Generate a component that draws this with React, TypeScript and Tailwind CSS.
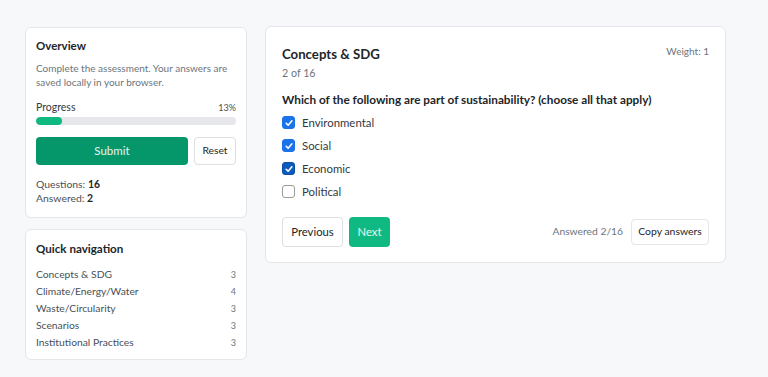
import { useState } from 'react';

const sections = [
  { name: 'Concepts & SDG', count: 3 },
  { name: 'Climate/Energy/Water', count: 4 },
  { name: 'Waste/Circularity', count: 3 },
  { name: 'Scenarios', count: 3 },
  { name: 'Institutional Practices', count: 3 },
];

const options = ['Environmental', 'Social', 'Economic', 'Political'];

function CheckBox({ checked, focused }: { checked: boolean; focused?: boolean }) {
  return (
    <span
      className={`flex h-[13px] w-[13px] flex-shrink-0 items-center justify-center rounded-[3px] border ${
        checked
          ? focused
            ? 'border-[#0b4fa3] bg-[#0d5bbd]'
            : 'border-[#1a73e8] bg-[#1a73e8]'
          : 'border-[#9a9a9a] bg-white'
      }`}
    >
      {checked && (
        <svg viewBox="0 0 12 12" className="h-[10px] w-[10px]">
          <path d="M2.6 6.3 L5 8.6 L9.5 3.4" fill="none" stroke="white" strokeWidth="1.9" strokeLinecap="round" strokeLinejoin="round" />
        </svg>
      )}
    </span>
  );
}

export default function App() {
  const [answers, setAnswers] = useState<boolean[]>([true, true, true, false]);
  const progress = 13;

  return (
    <div className="min-h-[377px] bg-[#f7f8fa] px-[25px] pt-[26px] text-[#212529]" style={{ fontFamily: 'Lato, "Noto Sans", sans-serif' }}>
      <div className="flex items-start gap-[18px]">
        {/* Sidebar */}
        <div className="flex w-[222px] flex-shrink-0 flex-col gap-[11px] pt-[1px]">
          <div className="rounded-md border border-[#e4e6ea] bg-white px-[10px] pb-[12px] pt-[9px]">
            <h3 className="text-[11.5px] font-bold leading-[18px]">Overview</h3>
            <p className="mt-[6px] text-[10px] leading-[14px] text-[#6c757d]">
              Complete the assessment. Your answers are saved locally in your browser.
            </p>
            <div className="mt-[11px] flex items-center justify-between leading-[15px]">
              <span className="text-[10.5px] text-[#343a40]">Progress</span>
              <span className="text-[9px] text-[#495057]">{progress}%</span>
            </div>
            <div className="mt-[2px] h-[8px] w-full overflow-hidden rounded-full bg-[#e5e7eb]">
              <div className="h-full rounded-full bg-[#10b981]" style={{ width: `${progress}%` }} />
            </div>
            <div className="mt-[12px] flex gap-[6px]">
              <button className="h-[28px] flex-1 rounded-[4px] bg-[#059669] text-[11.5px] text-white/90">Submit</button>
              <button className="h-[28px] w-[42px] rounded-[4px] border border-[#dcdfe3] bg-white text-[10.3px] text-[#212529]">Reset</button>
            </div>
            <div className="mt-[12px] text-[10.4px] leading-[14px] text-[#495057]">
              <div>
                Questions: <span className="font-bold text-[#212529]">16</span>
              </div>
              <div>
                Answered: <span className="font-bold text-[#212529]">2</span>
              </div>
            </div>
          </div>

          <div className="rounded-md border border-[#e4e6ea] bg-white px-[10px] pb-[8px] pt-[10px]">
            <h3 className="text-[11.6px] font-bold leading-[18px]">Quick navigation</h3>
            <ul className="mt-[8px]">
              {sections.map((s) => (
                <li key={s.name} className="flex h-[17px] items-center justify-between text-[10.3px] text-[#495057]">
                  <span>{s.name}</span>
                  <span className="text-[9px] text-[#6c757d]">{s.count}</span>
                </li>
              ))}
            </ul>
          </div>
        </div>

        {/* Question card */}
        <div className="w-[461px] rounded-md border border-[#e4e6ea] bg-white px-[16px] pb-[15px] pt-[17px]">
          <div className="flex items-start justify-between">
            <div>
              <h2 className="text-[13.2px] font-bold leading-[20px]">Concepts &amp; SDG</h2>
              <div className="mt-[1px] text-[10.7px] leading-[16px] text-[#6c757d]">2 of 16</div>
            </div>
            <span className="text-[10px] leading-[15px] text-[#6c757d]">Weight: 1</span>
          </div>
          <p className="mt-[10px] text-[11.75px] font-bold leading-[18px] text-[#212529]">
            Which of the following are part of sustainability? (choose all that apply)
          </p>
          <div className="mt-[2px] flex flex-col">
            {options.map((o, i) => (
              <label
                key={o}
                className="flex h-[23px] cursor-pointer items-center gap-[7px] text-[11.4px] text-[#343a40]"
                onClick={() => setAnswers(answers.map((a, j) => (j === i ? !a : a)))}
              >
                <CheckBox checked={answers[i]} focused={i === 2} />
                <span>{o}</span>
              </label>
            ))}
          </div>
          <div className="mt-[14px] flex items-center justify-between">
            <div className="flex gap-[6px]">
              <button className="h-[30px] w-[61px] rounded-[4px] border border-[#dcdfe3] bg-white text-[11.3px] text-[#212529]">Previous</button>
              <button className="h-[30px] w-[41px] rounded-[4px] bg-[#10b981] text-[11.3px] text-white/90">Next</button>
            </div>
            <div className="flex items-center gap-[8px]">
              <span className="text-[10.3px] text-[#6c757d]">Answered 2/16</span>
              <button className="h-[26px] w-[78px] rounded-[4px] border border-[#e4e6ea] bg-white text-[10.4px] text-[#212529]">Copy answers</button>
            </div>
          </div>
        </div>
      </div>
    </div>
  );
}
